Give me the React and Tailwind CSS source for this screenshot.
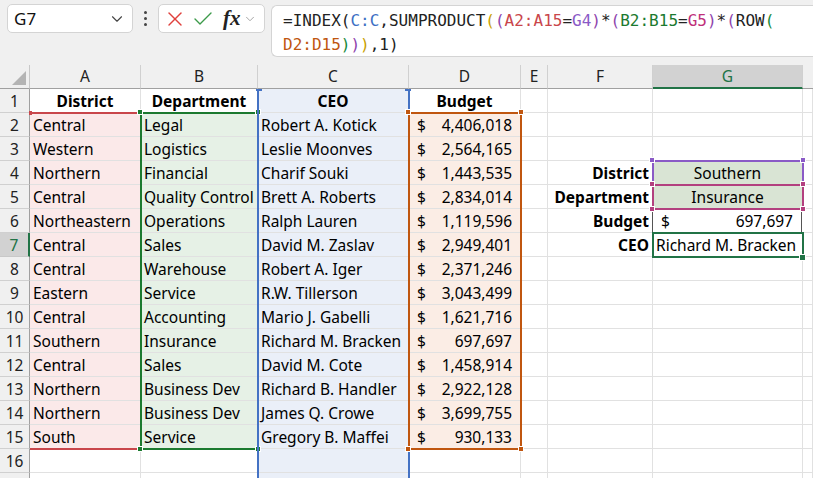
import { ChevronDown, X, Check } from "lucide-react";

const rows = [
  ["Central", "Legal", "Robert A. Kotick", "4,406,018"],
  ["Western", "Logistics", "Leslie Moonves", "2,564,165"],
  ["Northern", "Financial", "Charif Souki", "1,443,535"],
  ["Central", "Quality Control", "Brett A. Roberts", "2,834,014"],
  ["Northeastern", "Operations", "Ralph Lauren", "1,119,596"],
  ["Central", "Sales", "David M. Zaslav", "2,949,401"],
  ["Central", "Warehouse", "Robert A. Iger", "2,371,246"],
  ["Eastern", "Service", "R.W. Tillerson", "3,043,499"],
  ["Central", "Accounting", "Mario J. Gabelli", "1,621,716"],
  ["Southern", "Insurance", "Richard M. Bracken", "697,697"],
  ["Central", "Sales", "David M. Cote", "1,458,914"],
  ["Northern", "Business Dev", "Richard B. Handler", "2,922,128"],
  ["Northern", "Business Dev", "James Q. Crowe", "3,699,755"],
  ["South", "Service", "Gregory B. Maffei", "930,133"],
];

const lookup = {
  4: { label: "District", value: "Southern", kind: "fill" },
  5: { label: "Department", value: "Insurance", kind: "fill" },
  6: { label: "Budget", value: "697,697", kind: "money" },
  7: { label: "CEO", value: "Richard M. Bracken", kind: "text" },
};

const cell = "h-6 shrink-0 border-r border-b border-[#e1e1e1] flex items-center pt-[2px] overflow-hidden whitespace-nowrap";

function Money({ value }) {
  return (
    <div className="flex w-full items-center justify-between pl-[8px] pr-[8px]">
      <span>$</span>
      <span>{value}</span>
    </div>
  );
}

function HeaderRow() {
  const cols = [
    ["A", "w-[111px]"],
    ["B", "w-[117px]"],
    ["C", "w-[151px]"],
    ["D", "w-[112px]"],
    ["E", "w-[27px]"],
    ["F", "w-[105px]"],
  ];
  return (
    <div className="flex h-6 bg-[#f0f0f0] text-[#222]">
      <div className="relative h-6 w-[30px] shrink-0 border-r border-b border-[#c8c8c8] border-b-[#a0a0a0]">
        <div className="absolute right-[3px] bottom-[3px] h-0 w-0 border-l-[14px] border-t-[14px] border-l-transparent border-t-transparent border-r-0 border-b-[14px] border-b-[#b4b4b4]" />
      </div>
      {cols.map(([c, w]) => (
        <div key={c} className={`${w} flex h-6 shrink-0 items-center justify-center border-r border-b border-[#d0d0d0] border-b-[#a0a0a0] pt-[1px]`}>
          {c}
        </div>
      ))}
      <div className="flex h-6 w-[150px] shrink-0 items-center justify-center border-r border-[#d0d0d0] border-b-2 border-b-[#217346] bg-[#d2d2d2] pt-[1px] text-[#217346]">
        G
      </div>
      <div className="h-6 flex-1 border-b border-[#a0a0a0]" />
    </div>
  );
}

function RowHead({ n, blank }) {
  const sel = n === 7;
  return (
    <div
      className={
        sel
          ? "flex h-6 w-[30px] shrink-0 items-center justify-center border-r-2 border-b border-r-[#217346] border-b-[#c8c8c8] bg-[#d2d2d2] pt-[2px] text-[#217346]"
          : "flex h-6 w-[30px] shrink-0 items-center justify-center border-r border-b border-r-[#a0a0a0] border-b-[#d0d0d0] bg-[#f0f0f0] pt-[2px] text-[#222]"
      }
    >
      {blank ? "" : n}
    </div>
  );
}

function FCell({ n }) {
  const l = lookup[n];
  return <div className={`${cell} w-[105px] justify-end pr-[3px] font-bold`}>{l ? l.label : ""}</div>;
}

function GCell({ n }) {
  const l = lookup[n];
  if (!l) return <div className={`${cell} w-[150px]`} />;
  if (l.kind === "fill")
    return <div className={`${cell} w-[150px] justify-center bg-[#d9e4d4]`}>{l.value}</div>;
  if (l.kind === "money")
    return (
      <div className={`${cell} w-[150px] border-l border-l-[#555] border-r-[#555] -ml-px`}>
        <Money value={l.value} />
      </div>
    );
  return <div className={`${cell} w-[150px] pl-[3px]`}>{l.value}</div>;
}

function Row({ n, data, blank }) {
  const header = n === 1;
  return (
    <div className="flex">
      <RowHead n={n} blank={blank} />
      <div className={`${cell} w-[111px] ${header ? "justify-center font-bold" : data ? "bg-[#fbe9e9] pl-[3px]" : ""}`}>
        {header ? "District" : data ? data[0] : ""}
      </div>
      <div className={`${cell} w-[117px] ${header ? "justify-center font-bold" : data ? "bg-[#e6f1e6] pl-[3px]" : ""}`}>
        {header ? "Department" : data ? data[1] : ""}
      </div>
      <div className={`${cell} w-[151px] bg-[#eaeff8] ${header ? "justify-center font-bold" : "pl-[3px]"}`}>
        {header ? "CEO" : data ? data[2] : ""}
      </div>
      <div className={`${cell} w-[112px] ${header ? "justify-center font-bold" : data ? "bg-[#fbede5]" : ""}`}>
        {header ? "Budget" : data ? <Money value={data[3]} /> : ""}
      </div>
      <div className={`${cell} w-[27px]`} />
      <FCell n={n} />
      <GCell n={n} />
      <div className={`${cell} flex-1`} />
    </div>
  );
}

function Corner({ className }) {
  return <div className={`absolute h-[6px] w-[6px] border border-white ${className}`} />;
}

function Overlays() {
  return (
    <>
      {/* A2:A15 */}
      <div className="absolute left-[30px] top-[47px] h-[2px] w-[111px] bg-[#c9464b]" />
      <div className="absolute left-[30px] top-[383px] h-[2px] w-[111px] bg-[#c9464b]" />
      <div className="absolute left-[29px] top-[46px] h-[4px] w-[3px] bg-[#c9464b]" />
      {/* B2:B15 */}
      <div className="absolute left-[140px] top-[47px] h-[338px] w-[119px] border-2 border-[#1b7a2f]" />
      <Corner className="left-[137px] top-[44px] bg-[#1b7a2f]" />
      <Corner className="left-[255px] top-[44px] bg-[#1b7a2f]" />
      <Corner className="left-[137px] top-[381px] bg-[#1b7a2f]" />
      <Corner className="left-[255px] top-[381px] bg-[#1b7a2f]" />
      {/* C:C */}
      <div className="absolute left-[257px] top-[25px] h-[400px] w-[2px] bg-[#4472c4]" />
      <div className="absolute left-[408px] top-[25px] h-[400px] w-[2px] bg-[#4472c4]" />
      <div className="absolute left-[256px] top-[24px] h-[2px] w-[6px] bg-[#4472c4]" />
      <div className="absolute left-[405px] top-[24px] h-[2px] w-[6px] bg-[#4472c4]" />
      {/* D2:D15 */}
      <div className="absolute left-[408px] top-[47px] h-[338px] w-[114px] border-2 border-[#c0560f]" />
      <Corner className="left-[405px] top-[44px] bg-[#c0560f]" />
      <Corner className="left-[518px] top-[44px] bg-[#c0560f]" />
      <Corner className="left-[405px] top-[381px] bg-[#c0560f]" />
      <Corner className="left-[518px] top-[381px] bg-[#c0560f]" />
      {/* G4 */}
      <div className="absolute left-[652px] top-[95px] h-[26px] w-[152px] border-2 border-[#8a5ac6]" />
      <Corner className="left-[649px] top-[92px] bg-[#8a5ac6]" />
      <Corner className="left-[800px] top-[92px] bg-[#8a5ac6]" />
      {/* G5 */}
      <div className="absolute left-[652px] top-[119px] h-[26px] w-[152px] border-2 border-[#b3407f]" />
      <Corner className="left-[649px] top-[116px] bg-[#b3407f]" />
      <Corner className="left-[800px] top-[116px] bg-[#b3407f]" />
      <Corner className="left-[649px] top-[141px] bg-[#b3407f]" />
      <Corner className="left-[800px] top-[141px] bg-[#b3407f]" />
      {/* G7 selection */}
      <div className="absolute left-[652px] top-[167px] h-[26px] w-[152px] border-2 border-[#217346]" />
      <div className="absolute left-[799px] top-[189px] h-[7px] w-[7px] border border-white bg-[#217346]" />
    </>
  );
}

function FormulaText() {
  const o = "text-[#c9a000]";
  const p = "text-[#8e44ad]";
  const g = "text-[#178a3a]";
  return (
    <div className="font-['DejaVu_Sans_Mono',monospace] text-[16px] leading-[24px] text-[#222] break-all">
      <div>
        =INDEX(<span className="text-[#3d6fc4]">C:C</span>,SUMPRODUCT<span className={o}>(</span>
        <span className={p}>(</span>
        <span className="text-[#c9464b]">A2:A15</span>=<span className="text-[#8a5ac6]">G4</span>
        <span className={p}>)</span>*<span className={p}>(</span>
        <span className="text-[#1b7a2f]">B2:B15</span>=<span className="text-[#c0307a]">G5</span>
        <span className={p}>)</span>*<span className={p}>(</span>ROW<span className={g}>(</span>
      </div>
      <div>
        <span className="text-[#c0560f]">D2:D15</span>
        <span className={g}>)</span>
        <span className={p}>)</span>
        <span className={o}>)</span>,1)
      </div>
    </div>
  );
}

function Toolbar() {
  return (
    <div className="flex h-[65px] items-start gap-0 bg-[#f0f0f0] pt-[4px]">
      <div className="ml-[7px] flex h-[29px] w-[126px] items-center justify-between rounded-[5px] border border-[#d4d4d4] bg-white pl-[6px] pr-[6px] text-[17px] text-[#111]">
        <span>G7</span>
        <ChevronDown size={18} strokeWidth={1.5} className="text-[#444]" />
      </div>
      <div className="ml-[10px] flex h-[29px] w-[4px] flex-col items-center justify-center gap-[3px]">
        <span className="h-[3px] w-[3px] rounded-full bg-[#444]" />
        <span className="h-[3px] w-[3px] rounded-full bg-[#444]" />
        <span className="h-[3px] w-[3px] rounded-full bg-[#444]" />
      </div>
      <div className="ml-[11px] flex h-[29px] w-[107px] items-center rounded-[5px] border border-[#d4d4d4] bg-white pl-[4px]">
        <X size={24} strokeWidth={1.4} className="text-[#e0403c]" />
        <Check size={24} strokeWidth={1.4} className="ml-[4px] text-[#3c9a4a]" />
        <span className="ml-[8px] font-['Liberation_Serif',serif] text-[21px] font-bold italic leading-none text-[#222]">fx</span>
        <ChevronDown size={14} strokeWidth={1.5} className="ml-[2px] text-[#999]" />
      </div>
      <div className="ml-[6px] mt-[1px] flex h-[52px] flex-1 rounded-l-[6px] border border-r-0 border-[#d4d4d4] bg-white pl-[11px] pt-[3px]">
        <FormulaText />
      </div>
    </div>
  );
}

export default function App() {
  return (
    <div className="h-[478px] w-[813px] overflow-hidden bg-white font-['Noto_Sans',sans-serif] text-[15.5px] text-black">
      <Toolbar />
      <div className="relative">
        <HeaderRow />
        {Array.from({ length: 16 }, (_, i) => (
          <Row key={i} n={i + 1} data={i >= 1 && i <= 14 ? rows[i - 1] : null} />
        ))}
        <Row n={17} data={null} blank />
        <Overlays />
      </div>
    </div>
  );
}
